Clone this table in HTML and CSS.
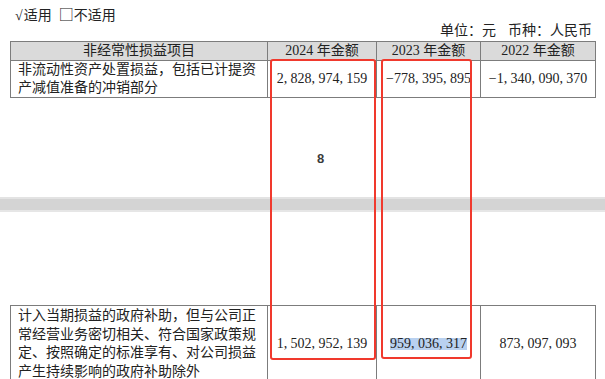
FILE: index.html
```html
<!DOCTYPE html>
<html lang="zh-CN">
<head>
<meta charset="utf-8">
<title>非经常性损益项目</title>
<link rel="stylesheet" href="styles.css">
</head>
<body>
<div class="sheet">
  <section class="page page-top">
    <div class="applicable"><span class="tick">√</span>适用<span class="box-mark">□</span>不适用</div>
    <div class="unit"><span>单位：元</span><span class="cur">币种：人民币</span></div>
    <table class="grid">
      <colgroup><col class="c1"><col class="c2"><col class="c3"><col class="c4"></colgroup>
      <tr class="head">
        <th>非经常性损益项目</th>
        <th>2024 年金额</th>
        <th>2023 年金额</th>
        <th>2022 年金额</th>
      </tr>
      <tr class="r1">
        <td class="item">非流动性资产处置损益，包括已计提资产减值准备的冲销部分</td>
        <td class="num">2<span class="cm">,</span>828<span class="cm">,</span>974<span class="cm">,</span>159</td>
        <td class="num"><span class="minus">−</span>778<span class="cm">,</span>395<span class="cm">,</span>895</td>
        <td class="num"><span class="minus">−</span>1<span class="cm">,</span>340<span class="cm">,</span>090<span class="cm">,</span>370</td>
      </tr>
    </table>
    <div class="page-no">8</div>
  </section>
  <div class="gap-band"></div>
  <section class="page page-bottom">
    <table class="grid">
      <colgroup><col class="c1"><col class="c2"><col class="c3"><col class="c4"></colgroup>
      <tr class="r2">
        <td class="item">计入当期损益的政府补助，但与公司正常经营业务密切相关、符合国家政策规定、按照确定的标准享有、对公司损益产生持续影响的政府补助除外</td>
        <td class="num">1<span class="cm">,</span>502<span class="cm">,</span>952<span class="cm">,</span>139</td>
        <td class="num"><span class="hl">959<span class="cm">,</span>036<span class="cm">,</span>317</span></td>
        <td class="num">873<span class="cm">,</span>097<span class="cm">,</span>093</td>
      </tr>
    </table>
  </section>
  <div class="mark mark-a"></div>
  <div class="mark mark-b"></div>
</div>
</body>
</html>
```

FILE: styles.css
```css
html, body {
  margin: 0;
  padding: 0;
  background: #ffffff;
}

body {
  font-family: "Liberation Serif", "Noto Sans CJK SC", serif;
  font-size: 14px;
  line-height: 18px;
  color: #222222;
}

.sheet {
  position: relative;
  width: 605px;
  height: 379px;
  overflow: hidden;
}

.page-top {
  height: 197px;
  box-sizing: border-box;
  padding-top: 5px;
}

.applicable {
  padding-left: 15px;
  height: 18px;
}

.tick {
  margin-right: 1px;
}

.box-mark {
  font-family: "Noto Sans CJK SC", sans-serif;
  margin-left: 7px;
  font-size: 15px;
}

.unit {
  display: flex;
  justify-content: flex-end;
  padding-right: 13px;
  margin-top: -1px;
  height: 19px;
}

.unit .cur {
  margin-left: 12px;
}

.grid {
  border-collapse: collapse;
  table-layout: fixed;
  width: 585px;
  margin-left: 10px;
}

.grid .c1 { width: 257px; }
.grid .c2 { width: 109px; }
.grid .c3 { width: 104px; }
.grid .c4 { width: 115px; }

.grid th,
.grid td {
  border: 1px solid #7c7c7c;
  padding: 0;
}

.grid th {
  background: #dadada;
  font-weight: normal;
  height: 17px;
  text-align: center;
}

.grid td.item {
  padding: 0 6px 0 7px;
  text-align: left;
}

.grid td.num {
  text-align: center;
  vertical-align: middle;
  white-space: nowrap;
}

.r1 td {
  height: 35px;
}

.r2 td {
  height: 75px;
  vertical-align: top;
}

.r2 td.item {
  padding-top: 1px;
  line-height: 18.5px;
}

.cm {
  margin-right: 3.4px;
}

.minus {
  display: inline-block;
  width: 8px;
  text-align: left;
}

.hl {
  display: inline-block;
  background: #b9d1f0;
  line-height: 12px;
  height: 12px;
}

.page-no {
  margin-top: 54px;
  padding-left: 317px;
  font-family: "Liberation Sans", sans-serif;
  font-size: 13px;
  font-weight: bold;
  color: #3a3a3a;
  line-height: 14px;
}

.gap-band {
  height: 15px;
  box-sizing: border-box;
  background: #d4d4d4;
  border-top: 2px solid #e3e3e3;
  border-bottom: 2px solid #e6e6e6;
}

.page-bottom {
  padding-top: 93px;
}

.mark {
  position: absolute;
  box-sizing: border-box;
  border: 2px solid #f0392d;
  border-radius: 3px;
}

.mark-a {
  left: 270px;
  top: 59px;
  width: 106px;
  height: 301px;
}

.mark-b {
  left: 381px;
  top: 59px;
  width: 91px;
  height: 300px;
}
```
